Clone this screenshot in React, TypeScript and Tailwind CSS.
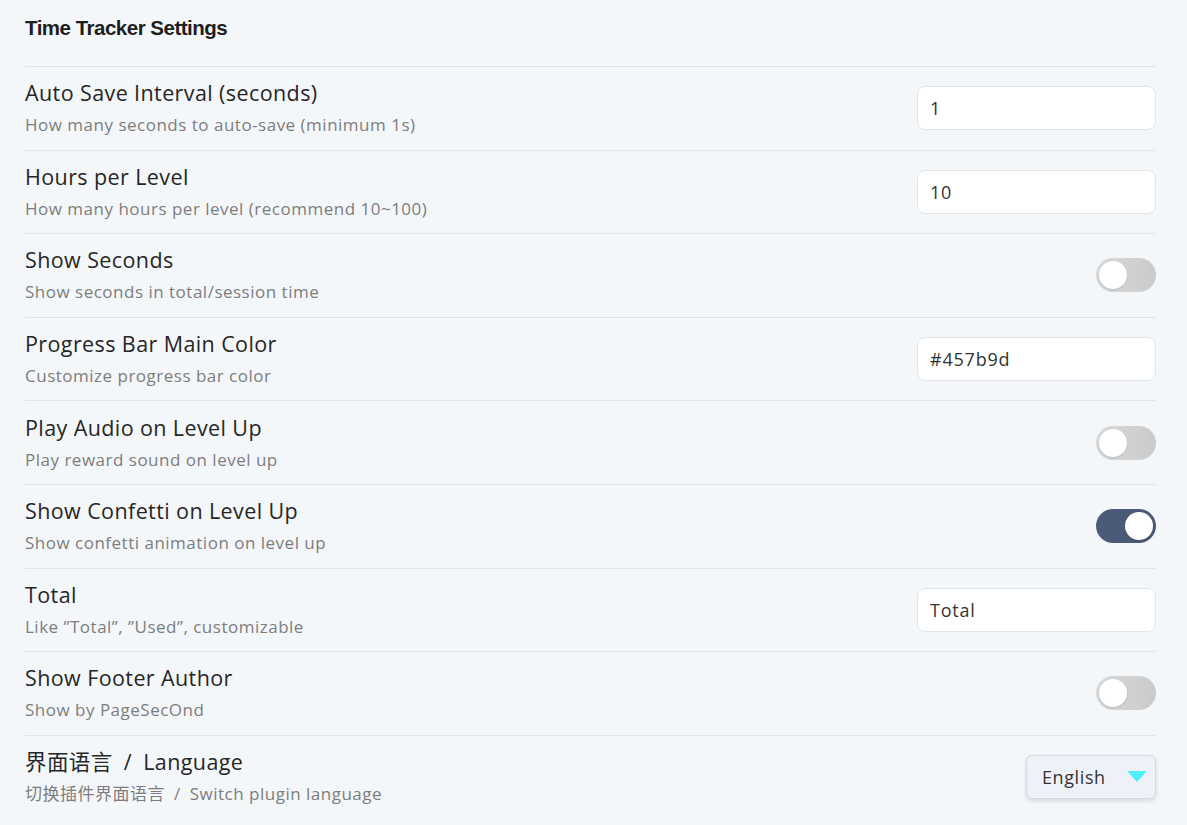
import React, { useState } from 'react';

type Setting =
  | { kind: 'input'; label: string; desc: string; value: string }
  | { kind: 'toggle'; label: string; desc: string; on: boolean }
  | { kind: 'select'; label: string; desc: string; value: string };

const settings: Setting[] = [
  { kind: 'input', label: 'Auto Save Interval (seconds)', desc: 'How many seconds to auto-save (minimum 1s)', value: '1' },
  { kind: 'input', label: 'Hours per Level', desc: 'How many hours per level (recommend 10~100)', value: '10' },
  { kind: 'toggle', label: 'Show Seconds', desc: 'Show seconds in total/session time', on: false },
  { kind: 'input', label: 'Progress Bar Main Color', desc: 'Customize progress bar color', value: '#457b9d' },
  { kind: 'toggle', label: 'Play Audio on Level Up', desc: 'Play reward sound on level up', on: false },
  { kind: 'toggle', label: 'Show Confetti on Level Up', desc: 'Show confetti animation on level up', on: true },
  { kind: 'input', label: 'Total', desc: 'Like ”Total”, ”Used”, customizable', value: 'Total' },
  { kind: 'toggle', label: 'Show Footer Author', desc: 'Show by PageSecOnd', on: false },
  { kind: 'select', label: '界面语言\u2002/\u2002Language', desc: '切换插件界面语言\u2002/\u2002Switch plugin language', value: 'English' },
];

function Toggle({ initial }: { initial: boolean }) {
  const [on, setOn] = useState(initial);
  return (
    <button
      onClick={() => setOn(!on)}
      className={`relative w-[60px] h-[34px] rounded-full flex items-center px-[3px] ${
        on ? 'bg-[#4b5a78] justify-end' : 'bg-gradient-to-r from-[#d9d9d9] to-[#cbcbcb] justify-start'
      }`}
    >
      <span className="block w-[28px] h-[28px] rounded-full bg-white shadow-sm" />
    </button>
  );
}

export default function App() {
  return (
    <div
      className="min-h-screen bg-[#f4f7fa] pl-[25px] pr-[31px] text-[#222]"
      style={{ fontFamily: '"Open Sans", "Noto Sans CJK SC", sans-serif' }}
    >
      <h1
        className="pt-[14px] pb-[24px] text-[20.5px] leading-[28px] font-bold tracking-[-0.5px] text-[#1e1e1e]"
        style={{ fontFamily: '"Liberation Sans", sans-serif' }}
      >
        Time Tracker Settings
      </h1>

      {settings.map((s) => (
        <div key={s.label} className="flex items-center justify-between border-t border-[#e1e5ea] py-[12px] h-[83.6px]">
          <div className="flex flex-col gap-[4px]">
            <div className="text-[21.5px] leading-[30px] tracking-[0.4px] text-[#262626]">{s.label}</div>
            <div className="text-[17px] leading-[26px] tracking-[0.5px] text-[#7d7d7d]">{s.desc}</div>
          </div>

          {s.kind === 'input' && (
            <input
              defaultValue={s.value}
              className="w-[239px] h-[44px] rounded-[8px] border border-[#e1e5ea] bg-white px-[12px] text-[18px] tracking-[0.8px] text-[#333] outline-none"
            />
          )}
          {s.kind === 'toggle' && <Toggle initial={s.on} />}
          {s.kind === 'select' && (
            <div className="flex items-center justify-between w-[130px] h-[44px] rounded-[6px] border border-[#d5d9de] bg-[#eef2f8] pl-[15px] pr-[8px] shadow-[0_2px_4px_rgba(0,0,0,0.12)] text-[18px] tracking-[0.6px] text-[#333]">
              <span>{s.value}</span>
              <svg width="20" height="12" viewBox="0 0 20 12">
                <polygon points="0,0 20,0 10,11" fill="#4ff0fa" />
              </svg>
            </div>
          )}
        </div>
      ))}
    </div>
  );
}
